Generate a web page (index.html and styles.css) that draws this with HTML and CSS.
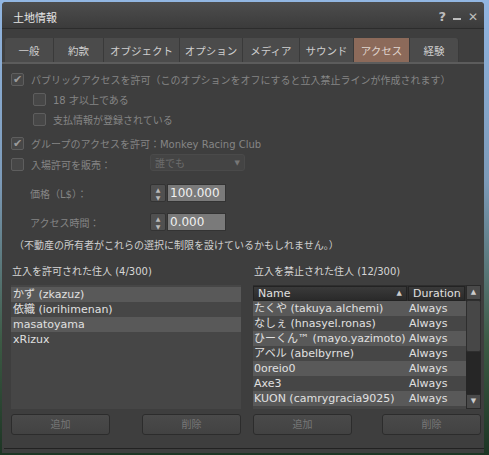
FILE: index.html
```html
<!DOCTYPE html>
<html lang="ja">
<head>
    <meta charset="UTF-8">
    <title>土地情報</title>
    <link rel="stylesheet" href="styles.css">
</head>
<body>
<div class="window">
    <div class="titlebar">
        <span class="title">土地情報</span>
        <div class="title-btns">
            <span class="tb-help">?</span>
            <span class="tb-min"></span>
            <span class="tb-close">✕</span>
        </div>
    </div>

    <div class="tabs">
        <div class="tab" style="width:49px">一般</div>
        <div class="tab" style="width:50px">約款</div>
        <div class="tab" style="width:76px">オブジェクト</div>
        <div class="tab" style="width:63px">オプション</div>
        <div class="tab" style="width:57px">メディア</div>
        <div class="tab" style="width:54px">サウンド</div>
        <div class="tab active" style="width:56px">アクセス</div>
        <div class="tab" style="width:49px">経験</div>
    </div>

    <div class="panel">
        <div class="row r1">
            <span class="check on">✔</span>
            <span class="dim">パブリックアクセスを許可（このオプションをオフにすると立入禁止ラインが作成されます）</span>
        </div>
        <div class="row sub">
            <span class="check"></span>
            <span class="dim">18 才以上である</span>
        </div>
        <div class="row sub">
            <span class="check"></span>
            <span class="dim">支払情報が登録されている</span>
        </div>
        <div class="row r4">
            <span class="check on">✔</span>
            <span class="dim">グループのアクセスを許可：Monkey Racing Club</span>
        </div>
        <div class="row r5">
            <span class="check"></span>
            <span class="dim sell-label">入場許可を販売：</span>
            <div class="dropdown"><span>誰でも</span><span class="dd-arrow">▼</span></div>
        </div>
        <div class="row field first">
            <span class="dim field-label">価格（L$）：</span>
            <div class="spinner"><span>▲</span><span>▼</span></div>
            <div class="num">100.000</div>
        </div>
        <div class="row field">
            <span class="dim field-label">アクセス時間：</span>
            <div class="spinner"><span>▲</span><span>▼</span></div>
            <div class="num">0.000</div>
        </div>
        <div class="note">（不動産の所有者がこれらの選択に制限を設けているかもしれません。）</div>

        <div class="lists">
            <div class="col">
                <div class="list-label">立入を許可された住人 (4/300)</div>
                <div class="list left-list">
                    <div class="item alt">かず (zkazuz)</div>
                    <div class="item">依織 (iorihimenan)</div>
                    <div class="item alt">masatoyama</div>
                    <div class="item">xRizux</div>
                </div>
                <div class="btns">
                    <div class="btn">追加</div>
                    <div class="btn">削除</div>
                </div>
            </div>
            <div class="col">
                <div class="list-label">立入を禁止された住人 (12/300)</div>
                <div class="list right-list">
                    <div class="grid-wrap">
                        <div class="grid-head">
                            <div class="hcell name-col">Name<span class="sort">▲</span></div>
                            <div class="hcell dur-col">Duration</div>
                        </div>
                        <div class="grid-row alt"><span class="name-col">たくや (takuya.alchemi)</span><span class="dur-col">Always</span></div>
                        <div class="grid-row"><span class="name-col">なしぇ (hnasyel.ronas)</span><span class="dur-col">Always</span></div>
                        <div class="grid-row alt"><span class="name-col">ひーくん™ (mayo.yazimoto)</span><span class="dur-col">Always</span></div>
                        <div class="grid-row"><span class="name-col">アベル (abelbyrne)</span><span class="dur-col">Always</span></div>
                        <div class="grid-row alt"><span class="name-col">0oreio0</span><span class="dur-col">Always</span></div>
                        <div class="grid-row"><span class="name-col">Axe3</span><span class="dur-col">Always</span></div>
                        <div class="grid-row alt"><span class="name-col">KUON (camrygracia9025)</span><span class="dur-col">Always</span></div>
                    </div>
                    <div class="scrollbar">
                        <div class="sb-btn">▲</div>
                        <div class="sb-thumb"></div>
                        <div class="sb-track"></div>
                        <div class="sb-btn">▼</div>
                    </div>
                </div>
                <div class="btns">
                    <div class="btn">追加</div>
                    <div class="btn">削除</div>
                </div>
            </div>
        </div>
        <div class="bottom-line"></div>
    </div>
</div>
</body>
</html>
```

FILE: styles.css
```css
body {
    margin: 0;
    width: 489px;
    height: 455px;
    overflow: hidden;
    font-family: "DejaVu Sans", "Noto Sans CJK JP", sans-serif;
    font-size: 10px;
    background: linear-gradient(to bottom, #92b6e2 0%, #7c9ab8 40%, #3c5a44 75%, #1d3524 100%);
}
.window {
    margin: 2px 5px 0 2px;
    width: 482px;
    height: 451px;
    background: #3e3e3e;
    border-radius: 4px 4px 0 0;
    display: flex;
    flex-direction: column;
}
.titlebar {
    height: 26px;
    display: flex;
    align-items: center;
    justify-content: space-between;
    padding: 0 6px 0 11px;
    background: linear-gradient(to bottom, #4d4d4d, #3b3b3b);
    border-bottom: 1px solid #2c2c2c;
    border-radius: 4px 4px 0 0;
}
.title {
    color: #e6e6e6;
    font-size: 11px;
    margin-top: 3px;
}
.title-btns {
    display: flex;
    align-items: center;
    gap: 7px;
    color: #bdbdbd;
    margin-top: 3px;
}
.tb-help {
    font-size: 13px;
    font-weight: bold;
}
.tb-min {
    width: 8px;
    height: 2px;
    background: #bdbdbd;
    margin-top: 4px;
}
.tb-close {
    font-size: 12px;
}
.tabs {
    display: flex;
    margin-top: 9px;
    padding-left: 3px;
    height: 24px;
    border-bottom: 2px solid #5c5c5c;
}
.tab {
    display: flex;
    align-items: center;
    justify-content: center;
    background: #4b4b4b;
    border-right: 1px solid #3a3a3a;
    color: #cfcfcf;
    font-size: 10.5px;
    box-sizing: border-box;
}
.tab:first-child {
    border-radius: 3px 0 0 0;
}
.tab:last-child {
    border-radius: 0 3px 0 0;
}
.tab.active {
    background: #8c6a5a;
    color: #e0d6d0;
}
.panel {
    flex-grow: 1;
    display: flex;
    flex-direction: column;
    padding: 5px 0 0 9px;
}
.row {
    display: flex;
    align-items: center;
    height: 20px;
}
.sub {
    padding-left: 22px;
}
.r4 {
    margin-top: 4px;
}
.r5 {
    margin-top: 1px;
}
.check {
    width: 11px;
    height: 11px;
    border: 1px solid #5e5e5e;
    background: #474747;
    border-radius: 2px;
    margin-right: 7px;
    color: #9a9a9a;
    font-size: 11px;
    line-height: 11px;
    text-align: center;
}
.dim {
    color: #858585;
    white-space: nowrap;
}
.sell-label {
    width: 119px;
}
.dropdown {
    width: 95px;
    height: 17px;
    box-sizing: border-box;
    border: 1px solid #4a4a4a;
    background: #444;
    border-radius: 3px;
    display: flex;
    align-items: center;
    justify-content: space-between;
    padding: 0 4px 0 4px;
    color: #6c6c6c;
    margin-top: -3px;
}
.dd-arrow {
    font-size: 7px;
    color: #777;
}
.field {
    padding-left: 19px;
    height: 18px;
}
.field.first {
    margin-top: 10px;
}
.field + .field {
    margin-top: 11px;
}
.field-label {
    width: 120px;
}
.spinner {
    width: 16px;
    height: 18px;
    box-sizing: border-box;
    border: 1px solid #333;
    border-radius: 2px;
    background: #505050;
    display: flex;
    flex-direction: column;
    justify-content: space-around;
    align-items: center;
    color: #bbb;
    font-size: 6px;
    line-height: 7px;
    margin-right: 1px;
}
.num {
    width: 59px;
    height: 18px;
    box-sizing: border-box;
    background: #7a7a7a;
    border: 1px solid #333;
    color: #f0f0f0;
    font-size: 12px;
    line-height: 16px;
    padding-left: 2px;
}
.note {
    color: #cfcfcf;
    margin-top: 7px;
    height: 16px;
    line-height: 16px;
    padding-left: 3px;
}
.lists {
    display: flex;
    gap: 12px;
    margin-top: 10px;
}
.col {
    display: flex;
    flex-direction: column;
}
.col:first-child {
    width: 230px;
}
.col:last-child {
    width: 228px;
}
.list-label {
    color: #d6d6d6;
    height: 16px;
    line-height: 16px;
    padding-left: 1px;
}
.list {
    margin-top: 5px;
    height: 124px;
    background: #464646;
    box-sizing: border-box;
}
.left-list {
    padding-top: 2px;
}
.item {
    height: 15px;
    line-height: 15px;
    color: #e0e0e0;
    padding-left: 2px;
    font-size: 11px;
}
.alt {
    background: #595959;
}
.right-list {
    display: flex;
}
.grid-wrap {
    flex-grow: 1;
}
.grid-head {
    display: flex;
    height: 16px;
    background: #2e2e2e;
}
.hcell {
    box-sizing: border-box;
    height: 15px;
    margin-top: 1px;
    background: linear-gradient(to bottom, #3a3a3a, #2a2a2a);
    border: 1px solid #232323;
    color: #e0e0e0;
    line-height: 13px;
    padding-left: 4px;
    font-size: 11px;
}
.hcell.name-col {
    width: 154px;
    display: flex;
    justify-content: space-between;
    padding-right: 4px;
}
.sort {
    font-size: 7px;
    color: #ccc;
}
.hcell.dur-col {
    width: 57px;
    margin-left: 1px;
}
.grid-row {
    display: flex;
    height: 15px;
    line-height: 15px;
    color: #e0e0e0;
    font-size: 11px;
}
.grid-row .name-col {
    width: 155px;
    padding-left: 1px;
    white-space: nowrap;
    overflow: hidden;
}
.scrollbar {
    width: 15px;
    display: flex;
    flex-direction: column;
    background: #262626;
}
.sb-btn {
    height: 15px;
    background: #4a4a4a;
    border: 1px solid #2a2a2a;
    box-sizing: border-box;
    color: #ccc;
    font-size: 7px;
    text-align: center;
    line-height: 13px;
}
.sb-thumb {
    height: 52px;
    background: #474747;
    border: 1px solid #2e2e2e;
    border-radius: 2px;
    box-sizing: border-box;
}
.sb-track {
    flex-grow: 1;
}
.btns {
    display: flex;
    justify-content: space-between;
    margin-top: 5px;
}
.btn {
    width: 99px;
    height: 21px;
    box-sizing: border-box;
    border: 1px solid #2c2c2c;
    border-radius: 3px;
    background: linear-gradient(to bottom, #4a4a4a, #424242);
    color: #777;
    text-align: center;
    line-height: 19px;
}
.bottom-line {
    margin-top: 13px;
    margin-left: -7px;
    height: 1px;
    background: #222;
}
```
